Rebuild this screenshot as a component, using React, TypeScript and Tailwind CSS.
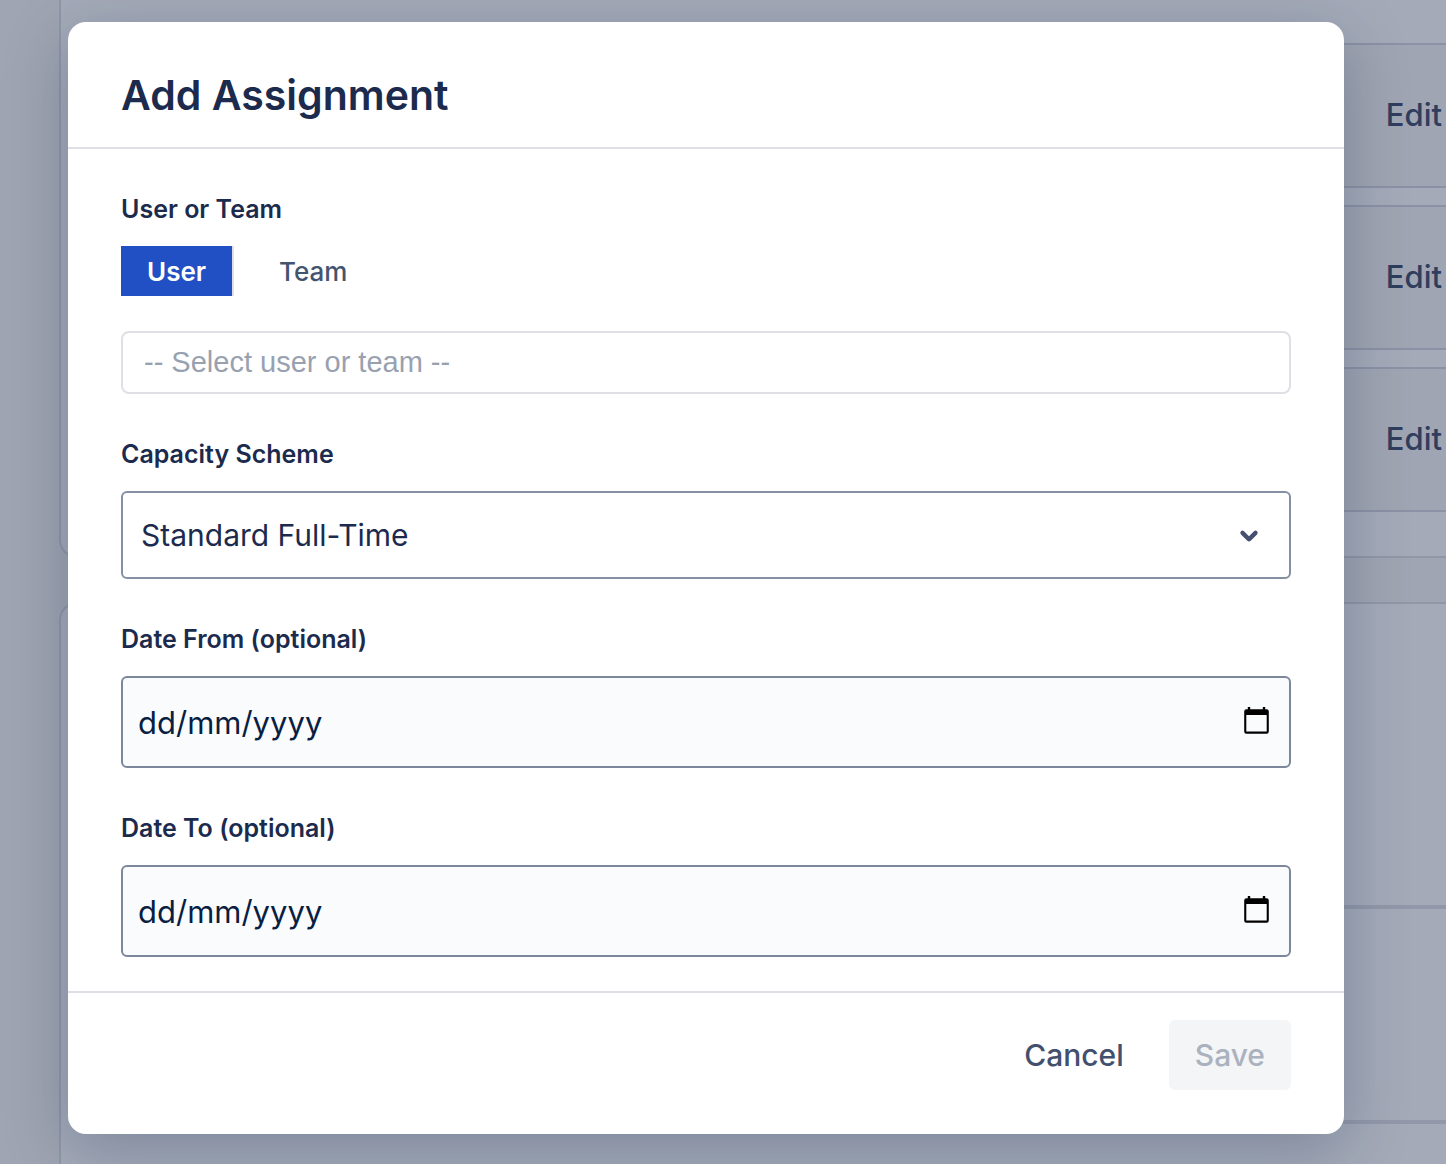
import {FC, useState} from "react";

const assignments = [1, 2, 3];

const CalendarIcon: FC = () => (
    <svg width="25" height="27" viewBox="0 0 25 27" fill="none" aria-hidden="true">
        <path d="M3.8 0h2.4v4H3.8zM18.8 0h2.4v4h-2.4z" fill="#000000"/>
        <path
            fillRule="evenodd"
            d="M2.5 2.2h20A2.3 2.3 0 0 1 24.8 4.5v20a2.2 2.2 0 0 1-2.2 2.2H2.4a2.2 2.2 0 0 1-2.2-2.2v-20A2.3 2.3 0 0 1 2.5 2.2ZM2.3 8v16.6h20.4V8Z"
            fill="#000000"
        />
    </svg>
);

const ChevronIcon: FC = () => (
    <svg width="52" height="52" viewBox="0 0 24 24" aria-hidden="true">
        <path
            d="M8.292 10.293a1.009 1.009 0 0 0 0 1.419l2.939 2.965c.218.215.5.322.779.322s.556-.107.769-.322l2.93-2.955a1.01 1.01 0 0 0 0-1.419.987.987 0 0 0-1.406 0l-2.298 2.317-2.307-2.327a.99.99 0 0 0-1.406 0z"
            fill="#44506e"
        />
    </svg>
);

type DateFieldProps = {
    id: string;
    label: string;
}

const DateField: FC<DateFieldProps> = ({id, label}) => {
    const [value, setValue] = useState("");

    return (
        <div className="flex flex-col gap-[21px]">
            <label htmlFor={id} className="text-[25px] leading-8 font-semibold">{label}</label>
            <div className="flex items-center h-[92px] pl-[15px] pr-5 border-2 rounded-[6px] border-[#7d879c] bg-[#fafbfc]">
                <input
                    id={id}
                    type="text"
                    value={value}
                    onChange={(e) => setValue(e.target.value)}
                    placeholder="dd/mm/yyyy"
                    className="flex-1 min-w-0 h-full text-[31px] text-[#091e42] placeholder:text-[#091e42] bg-transparent outline-none"
                />
                <button type="button" aria-label="Open calendar" className="mb-1">
                    <CalendarIcon/>
                </button>
            </div>
        </div>
    )
}

const PageBehind: FC = () => (
    <div className="min-h-screen flex flex-col gap-11 pl-[59px] bg-[#9fa5b2]">
        <div className="flex flex-col gap-[17px] pt-[43px] pb-11 pl-11 border-l-2 border-b-2 rounded-bl-[18px] border-[#9097a8] bg-[#a4aab8]">
            {assignments.map((id) => (
                <div key={id} className="flex items-center justify-end h-[145px] pr-1 border-y-2 border-[#8b92a5] bg-[#9fa5b2]">
                    <button type="button" className="text-[31px] font-medium text-[#2f3d5e]">Edit</button>
                </div>
            ))}
        </div>
        <div className="flex-1 flex flex-col border-l-2 border-t-2 rounded-tl-[18px] border-[#9097a8] bg-[#a4aab8]">
            <div className="h-[305px] ml-11 border-b-4 border-[#9298a9]"/>
            <div className="h-[215px] ml-11 border-b-4 border-[#9298a9]"/>
        </div>
    </div>
);

const AddAssignmentModal: FC = () => {
    const [target, setTarget] = useState("user");
    const [search, setSearch] = useState("");

    return (
        <form
            role="dialog"
            aria-labelledby="modal-title"
            onSubmit={(e) => e.preventDefault()}
            className="flex-1 flex flex-col rounded-[18px] bg-white text-[#1c2b4d] shadow-[0_16px_64px_rgba(9,30,66,0.25)]"
        >
            <div className="px-[53px] pt-[45px] pb-6 border-b-2 border-[#dfe0e6]">
                <h1 id="modal-title" className="text-[41px] leading-14 font-semibold">Add Assignment</h1>
            </div>

            <div className="flex flex-col gap-11 px-[53px] pt-11 pb-[34px]">
                <div className="flex flex-col">
                    <label htmlFor="target" className="mb-[21px] text-[25px] leading-8 font-semibold">User or Team</label>
                    <div className="flex gap-[19px] mb-[35px] text-[26px]">
                        <button
                            type="button"
                            onClick={() => setTarget("user")}
                            aria-pressed={target === "user"}
                            className="h-[50px] px-[26px] border-r-2 border-[#dfe0e6] bg-[#2150c5] bg-clip-padding font-semibold text-white"
                        >
                            User
                        </button>
                        <button
                            type="button"
                            onClick={() => setTarget("team")}
                            aria-pressed={target === "team"}
                            className="h-[50px] px-[26px] font-medium text-[#44546f]"
                        >
                            Team
                        </button>
                    </div>
                    <input
                        id="target"
                        type="text"
                        value={search}
                        onChange={(e) => setSearch(e.target.value)}
                        placeholder="-- Select user or team --"
                        className="h-[63px] px-[21px] border-2 rounded-[8px] border-[#dfe0e6] font-['Liberation_Sans',sans-serif] text-[29px] placeholder:text-[#98a1b0] outline-none"
                    />
                </div>

                <div className="flex flex-col gap-[21px]">
                    <label htmlFor="scheme" className="text-[25px] leading-8 font-semibold">Capacity Scheme</label>
                    <div className="relative">
                        <select
                            id="scheme"
                            className="w-full h-[88px] pl-[18px] pr-20 border-2 rounded-[6px] border-[#8590a2] bg-white appearance-none text-[30px] outline-none"
                        >
                            <option>Standard Full-Time</option>
                        </select>
                        <span className="absolute inset-y-0 right-4 flex items-center pointer-events-none">
                            <ChevronIcon/>
                        </span>
                    </div>
                </div>

                <DateField id="date-from" label="Date From (optional)"/>
                <DateField id="date-to" label="Date To (optional)"/>
            </div>

            <div className="flex justify-end gap-[19px] px-[53px] pt-[27px] pb-11 border-t-2 border-[#dfe0e6] text-[30px] font-medium">
                <button type="button" className="h-[70px] px-[26px] rounded-[6px] text-[#42506e]">Cancel</button>
                <button type="submit" disabled className="h-[70px] px-[26px] rounded-[6px] bg-[#f4f5f7] text-[#abb2bf]">Save</button>
            </div>
        </form>
    )
}

export default function App() {
    return (
        <div className="relative min-h-screen overflow-hidden font-['Inter',sans-serif]">
            <PageBehind/>
            <div className="absolute inset-0 flex items-start pt-[22px] pl-[68px] pr-[102px]">
                <AddAssignmentModal/>
            </div>
        </div>
    )
}
